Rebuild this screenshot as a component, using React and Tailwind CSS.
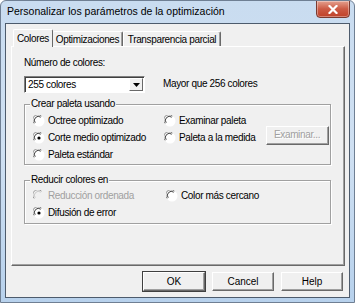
import React from 'react';

const font = { fontFamily: '"Liberation Sans", Arial, sans-serif' };

function Radio({ checked, disabled }) {
  return (
    <svg width="12" height="12" viewBox="0 0 12 12" className="shrink-0">
      <circle cx="6" cy="6" r="5.5" fill={disabled ? '#f0f0f0' : '#ffffff'} />
      <path d="M1.2 8.5 A5 5 0 0 1 8.5 1.2" fill="none" stroke={disabled ? '#9a9a9a' : '#8a8a8a'} strokeWidth="1" />
      <path d="M2.2 7.8 A4 4 0 0 1 7.8 2.2" fill="none" stroke={disabled ? '#c8c8c8' : '#404040'} strokeWidth="1" />
      {checked && <circle cx="6" cy="6" r="1.6" fill={disabled ? '#a0a0a0' : '#000'} />}
    </svg>
  );
}

function RadioItem({ label, checked, disabled, className = '' }) {
  return (
    <div className={`flex items-center gap-[3px] h-[17px] ${className}`}>
      <Radio checked={checked} disabled={disabled} />
      <span className={disabled ? 'text-[#a0a0a0]' : 'text-black'}>{label}</span>
    </div>
  );
}

function GroupBox({ title, className = '', children }) {
  return (
    <div className={`relative border border-[#a0a0a0] shadow-[inset_1px_1px_0_#fff,1px_1px_0_#fff] ${className}`}>
      <span className="absolute -top-[7px] left-[5px] bg-[#f0f0f0] px-[1px] leading-[12px]">{title}</span>
      {children}
    </div>
  );
}

function Button({ children, primary, disabled, className = '' }) {
  return (
    <div
      className={`flex items-center justify-center bg-[#f0f0f0] border-t border-l border-t-white border-l-white border-r border-b border-r-[#696969] border-b-[#696969] shadow-[inset_-1px_-1px_0_#a0a0a0] ${primary ? 'outline outline-1 outline-[#404040]' : ''} ${disabled ? 'text-[#a0a0a0] [text-shadow:1px_1px_0_#fff]' : 'text-black'} ${className}`}
    >
      {children}
    </div>
  );
}

export default function App() {
  return (
    <div
      className="w-[355px] h-[303px] overflow-hidden flex flex-col bg-gradient-to-b from-[#c9dcf0] via-[#cfe0f2] to-[#b7d1ec] border border-[#6f7f93] rounded-t-[6px]"
      style={font}
    >
      {/* title bar */}
      <div className="h-[22px] flex items-start justify-between shrink-0">
        <span className="pl-[6px] pt-[4px] text-[10.5px] leading-[13px] text-black">
          Personalizar los parámetros de la optimización
        </span>
        <div className="mr-[4px] -mt-[1px] w-[34px] h-[18px] rounded-b-[4px] border border-[#7a3a30] bg-gradient-to-b from-[#e3a08f] via-[#cc5a44] to-[#bf4129] flex items-center justify-center shadow-[inset_0_0_0_1px_rgba(255,255,255,0.35)]">
          <svg width="10" height="9" viewBox="0 0 10 9">
            <path d="M1.5 1 L8.5 8 M8.5 1 L1.5 8" stroke="#fff" strokeWidth="2.2" strokeLinecap="square" />
          </svg>
        </div>
      </div>

      {/* client area */}
      <div className="mx-[4px] h-[275px] shrink-0 border border-[#4d5b6c] bg-[#f0f0f0] flex flex-col text-[10px] leading-[12px] tracking-[-0.35px] text-black">
        {/* tabs */}
        <div className="pl-[7px] mt-[5px] h-[17px] flex items-end">
          <div className="relative z-10 w-[40px] h-[18px] -mb-[1px] bg-[#f0f0f0] border-t border-l border-t-white border-l-white border-r border-r-[#696969] rounded-t-[2px] flex items-start justify-center pt-[3px]">
            Colores
          </div>
          <div className="w-[70px] h-[15px] border-t border-t-white border-r border-r-[#696969] shadow-[inset_-1px_0_0_#a0a0a0] rounded-t-[2px] flex items-start justify-center pt-[2px]">
            Optimizaciones
          </div>
          <div className="w-[98px] h-[15px] border-t border-t-white border-l border-l-white border-r border-r-[#696969] shadow-[inset_-1px_0_0_#a0a0a0] rounded-t-[2px] flex items-start justify-center pt-[2px]">
            Transparencia parcial
          </div>
        </div>

        {/* panel */}
        <div className="ml-[5px] w-[334px] h-[220px] border-t border-l border-t-white border-l-white border-r border-b border-r-[#696969] border-b-[#696969] shadow-[inset_-1px_-1px_0_#a0a0a0] pl-[12px] pt-[10px]">
          <div className="leading-[12px]">Número de colores:</div>
          <div className="flex items-center mt-[7px]">
            <div className="w-[121px] h-[17px] bg-white border-t border-l border-t-[#808080] border-l-[#808080] border-b border-r border-b-white border-r-white shadow-[inset_1px_1px_0_#404040] flex items-center justify-between pl-[3px] pr-[1px]">
              <span>255 colores</span>
              <div className="w-[14px] h-[13px] bg-[#f0f0f0] border-t border-l border-t-white border-l-white border-r border-b border-r-[#696969] border-b-[#696969] flex items-center justify-center">
                <svg width="7" height="4" viewBox="0 0 7 4">
                  <path d="M0 0 H7 L3.5 4 Z" fill="#000" />
                </svg>
              </div>
            </div>
            <span className="ml-[18px] mt-[-1px]">Mayor que 256 colores</span>
          </div>

          <GroupBox title="Crear paleta usando" className="mt-[11px] w-[307px] h-[61px]">
            <div className="flex pl-[8px] pt-[7px]">
              <div className="w-[131px] flex flex-col">
                <RadioItem label="Octree optimizado" />
                <RadioItem label="Corte medio optimizado" checked />
                <RadioItem label="Paleta estándar" />
              </div>
              <div className="flex flex-col">
                <RadioItem label="Examinar paleta" />
                <div className="flex items-center">
                  <RadioItem label="Paleta a la medida" />
                  <Button disabled className="ml-[10px] -mt-[5px] w-[63px] h-[19px]">Examinar...</Button>
                </div>
              </div>
            </div>
          </GroupBox>

          <GroupBox title="Reducir colores en" className="mt-[15px] w-[307px] h-[44px]">
            <div className="flex pl-[8px] pt-[6px]">
              <div className="w-[132px] flex flex-col">
                <RadioItem label="Reducción ordenada" disabled />
                <RadioItem label="Difusión de error" checked />
              </div>
              <div className="flex flex-col">
                <RadioItem label="Color más cercano" className="pl-[1px]" />
              </div>
            </div>
          </GroupBox>
        </div>

        {/* buttons */}
        <div className="flex justify-end gap-[7px] pr-[6px] mt-[6px]">
          <Button primary className="w-[62px] h-[19px] tracking-normal">OK</Button>
          <Button className="w-[62px] h-[19px] tracking-normal">Cancel</Button>
          <Button className="w-[62px] h-[19px] tracking-normal">Help</Button>
        </div>
      </div>
    </div>
  );
}
